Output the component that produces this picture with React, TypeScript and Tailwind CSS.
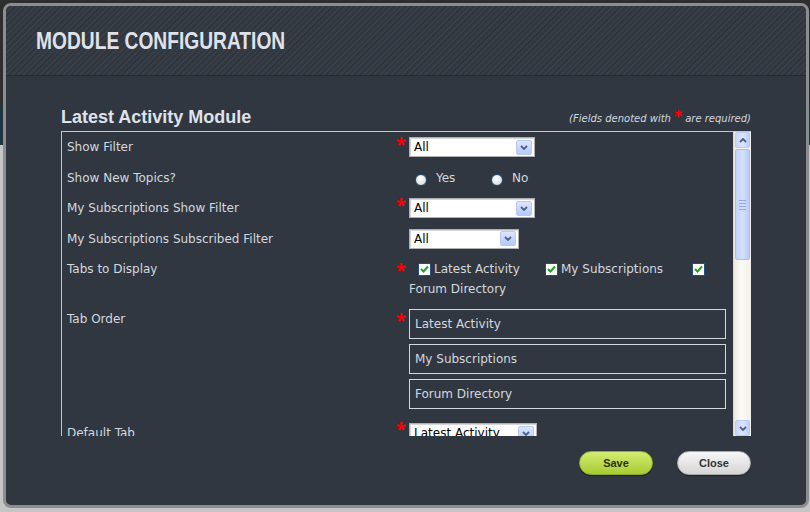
const ui = "font-['DejaVu_Sans',sans-serif]";
const arial = "font-['Liberation_Sans',Arial,sans-serif]";

const Chevron = ({ up = false }: { up?: boolean }) => (
  <svg width="8" height="5" viewBox="0 0 8 5" className={up ? "rotate-180" : ""}>
    <path d="M1 1 L4 4 L7 1" fill="none" stroke="#4d6185" strokeWidth="1.8" />
  </svg>
);

const Select = ({ value, width }: { value: string; width: string }) => (
  <div
    className={`${width} h-[20px] bg-white border border-[#aeb0b3] shadow-[inset_1px_1px_0_#d6d6d6] flex items-center justify-between pl-[4px] pr-[2px]`}
  >
    <span className={`${ui} text-[12px] text-black leading-none`}>{value}</span>
    <span className="w-[16px] h-[15px] rounded-[2px] border border-[#b9cbf3] bg-[linear-gradient(#dbe5fd,#b6c9f8)] flex items-center justify-center">
      <Chevron />
    </span>
  </div>
);

const Star = () => (
  <span className="w-[14px] text-[#ff0000] font-bold text-[18px] leading-none -translate-y-[3px] pl-[1px]">
    *
  </span>
);

const Checkbox = () => (
  <span className="w-[13px] h-[13px] border border-[#1c5180] bg-white flex items-center justify-center shrink-0">
    <svg width="9" height="8" viewBox="0 0 9 8">
      <path d="M1 4 L3.5 6.5 L8 1.5" fill="none" stroke="#21a121" strokeWidth="2" />
    </svg>
  </span>
);

const Radio = ({ className = "" }: { className?: string }) => (
  <span
    className={`block shrink-0 w-[12px] h-[12px] rounded-full border border-[#1f4d75] bg-[radial-gradient(circle_at_40%_35%,#ffffff,#d2d2d2)] translate-y-[2px] ${className}`}
  />
);

const Label = ({ children }: { children: string }) => (
  <span className={`${ui} w-[328px] text-[12px] text-[#d3d7df]`}>{children}</span>
);

const Scrollbar = () => (
  <div className="w-[18px] shrink-0 flex flex-col border-l border-[#d9d9d4] bg-[linear-gradient(90deg,#eceae0,#fbfaf6_40%,#f2f0e8)]">
    <div className="h-[16px] mx-[1px] rounded-[2px] border border-[#b9cbf3] bg-[linear-gradient(90deg,#c7d6fb,#dae5fd,#bccffa)] flex items-center justify-center">
      <Chevron up />
    </div>
    <div className="h-[111px] mt-[1px] mx-[1px] rounded-[2px] border border-[#a9bef0] bg-[linear-gradient(90deg,#c2d3fb,#d3e0fd,#bacdf8)] flex flex-col items-center justify-center gap-[2px]">
      <span className="w-[7px] h-[1px] bg-[#8fa9e6]" />
      <span className="w-[7px] h-[1px] bg-[#8fa9e6]" />
      <span className="w-[7px] h-[1px] bg-[#8fa9e6]" />
      <span className="w-[7px] h-[1px] bg-[#8fa9e6]" />
    </div>
    <div className="flex-1" />
    <div className="h-[16px] mx-[1px] rounded-[2px] border border-[#b9cbf3] bg-[linear-gradient(90deg,#c7d6fb,#dae5fd,#bccffa)] flex items-center justify-center">
      <Chevron />
    </div>
  </div>
);

const App = () => {
  return (
    <div className="w-[810px] h-[512px] overflow-hidden p-[3px] bg-[linear-gradient(#2e2e2e_0px,#2e2e2e_105px,#1c3540_105px,#1c3540_145px,#c5c5c5_145px)]">
      <div className="w-[806px] h-[505px] rounded-[8px] border-[3px] border-[#8c8d8f] bg-[#313741] overflow-hidden flex flex-col">
        <div className="h-[70px] shrink-0 border-b border-[#262a31] flex items-center pl-[30px] bg-[repeating-linear-gradient(135deg,#383e48_0px,#383e48_2px,#30353e_2px,#30353e_4px)]">
          <h1
            className={`${arial} font-bold text-[24px] leading-none text-[#dfe2ea] scale-x-[0.8] origin-left whitespace-nowrap`}
          >
            MODULE CONFIGURATION
          </h1>
        </div>

        <div className="flex-1 px-[55px] pt-[28px]">
          <div className="flex items-end justify-between h-[22px] mb-[5px]">
            <h2 className={`${arial} font-bold text-[18px] leading-none text-[#dfe2ea]`}>
              Latest Activity Module
            </h2>
            <p className={`${ui} italic text-[10px] text-[#d3d7df]`}>
              (Fields denoted with{" "}
              <span className="text-[#ff0000] not-italic font-bold text-[15px] leading-none">*</span> are
              required)
            </p>
          </div>

          <div className="h-[305px] flex border-t border-l border-[#c3c6cb]">
            <div className="flex-1 overflow-hidden pl-[5px]">
              <div className="h-[30px] flex items-center">
                <Label>Show Filter</Label>
                <Star />
                <Select value="All" width="w-[126px]" />
              </div>

              <div className="h-[31px] flex items-center">
                <Label>Show New Topics?</Label>
                <span className="w-[14px]" />
                <div className={`${ui} flex items-center text-[12px] text-[#d3d7df]`}>
                  <Radio className="ml-[6px]" />
                  <span className="ml-[9px] w-[55px]">Yes</span>
                  <Radio />
                  <span className="ml-[9px]">No</span>
                </div>
              </div>

              <div className="h-[30px] flex items-center">
                <Label>My Subscriptions Show Filter</Label>
                <Star />
                <Select value="All" width="w-[126px]" />
              </div>

              <div className="h-[31px] flex items-center">
                <Label>My Subscriptions Subscribed Filter</Label>
                <span className="w-[14px]" />
                <Select value="All" width="w-[110px]" />
              </div>

              <div className="h-[45px] flex items-start pt-[5px]">
                <span className={`${ui} w-[328px] text-[12px] leading-[20px] text-[#d3d7df]`}>
                  Tabs to Display
                </span>
                <span className="w-[14px] text-[#ff0000] font-bold text-[18px] leading-none pt-[2px] pl-[1px]">*</span>
                <div className={`${ui} text-[12px] leading-[20px] text-[#d3d7df]`}>
                  <div className="flex items-center h-[20px]">
                    <span className="w-[9px]" />
                    <span className="w-[127px] flex items-center gap-[3px]">
                      <Checkbox />
                      Latest Activity
                    </span>
                    <span className="w-[147px] flex items-center gap-[3px]">
                      <Checkbox />
                      My Subscriptions
                    </span>
                    <Checkbox />
                  </div>
                  <div>Forum Directory</div>
                </div>
              </div>

              <div className="flex items-start pt-[10px]">
                <span className={`${ui} w-[328px] text-[12px] leading-[20px] text-[#d3d7df]`}>Tab Order</span>
                <span className="w-[14px] text-[#ff0000] font-bold text-[18px] leading-none pt-[2px] pl-[1px]">*</span>
                <div className="flex flex-col gap-[5px]">
                  {["Latest Activity", "My Subscriptions", "Forum Directory"].map((tab) => (
                    <div
                      key={tab}
                      className={`${ui} w-[317px] h-[30px] border border-[#d3d7df] flex items-center pl-[5px] text-[12px] text-[#d3d7df]`}
                    >
                      {tab}
                    </div>
                  ))}
                </div>
              </div>

              <div className="flex items-start mt-[14px]">
                <span className={`${ui} w-[328px] text-[12px] leading-[16px] pt-[2px] text-[#d3d7df]`}>
                  Default Tab
                </span>
                <Star />
                <Select value="Latest Activity" width="w-[128px]" />
              </div>
            </div>
            <Scrollbar />
          </div>

          <div className="flex justify-end gap-[24px] mt-[15px]">
            <button
              className={`${arial} w-[74px] h-[24px] rounded-full border border-[#8cab33] bg-[linear-gradient(#d3ec70,#a7cc33)] shadow-[0_1px_1px_rgba(0,0,0,0.4)] text-[11px] font-bold text-[#2a3410]`}
            >
              Save
            </button>
            <button
              className={`${arial} w-[74px] h-[24px] rounded-full border border-[#a9a9a9] bg-[linear-gradient(#f7f7f7,#d5d5d5)] shadow-[0_1px_1px_rgba(0,0,0,0.4)] text-[11px] font-bold text-[#333]`}
            >
              Close
            </button>
          </div>
        </div>
      </div>
    </div>
  );
};

export default App;
